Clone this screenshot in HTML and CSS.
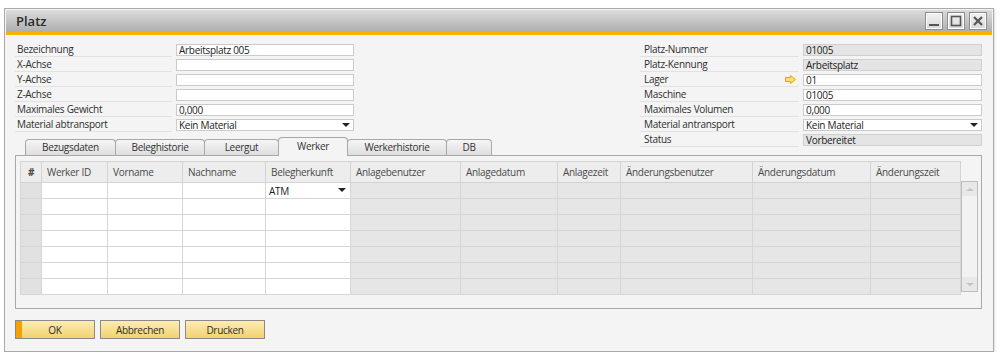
FILE: index.html
```html
<!DOCTYPE html>
<html lang="de">
<head>
    <meta charset="UTF-8">
    <meta name="viewport" content="width=device-width, initial-scale=1.0">
    <title>Platz</title>
    <link rel="stylesheet" href="styles.css">
</head>
<body>
    <div class="window">
        <div class="titlebar">
            <span class="title">Platz</span>
            <div class="winbtns">
                <span class="winbtn">
                    <svg width="12" height="12" viewBox="0 0 12 12"><rect x="1" y="9" width="10" height="2" fill="#555"/></svg>
                </span>
                <span class="winbtn">
                    <svg width="12" height="12" viewBox="0 0 12 12"><rect x="1.5" y="1.5" width="9" height="9" fill="none" stroke="#555" stroke-width="1.6"/></svg>
                </span>
                <span class="winbtn">
                    <svg width="12" height="12" viewBox="0 0 12 12"><path d="M2 2L10 10M10 2L2 10" stroke="#555" stroke-width="2.2"/></svg>
                </span>
            </div>
        </div>

        <div class="content">
            <div class="top">
                <div class="form form-left">
                    <div class="row"><span class="lbl">Bezeichnung</span><span class="fld">Arbeitsplatz 005</span></div>
                    <div class="row"><span class="lbl">X-Achse</span><span class="fld"></span></div>
                    <div class="row"><span class="lbl">Y-Achse</span><span class="fld"></span></div>
                    <div class="row"><span class="lbl">Z-Achse</span><span class="fld"></span></div>
                    <div class="row"><span class="lbl">Maximales Gewicht</span><span class="fld">0,000</span></div>
                    <div class="row"><span class="lbl">Material abtransport</span><span class="fld select">Kein Material<i class="caret"></i></span></div>
                </div>
                <div class="form form-right">
                    <div class="row"><span class="lbl">Platz-Nummer</span><span class="fld off">01005</span></div>
                    <div class="row"><span class="lbl">Platz-Kennung</span><span class="fld off">Arbeitsplatz</span></div>
                    <div class="row"><span class="lbl">Lager
                        <svg class="link" width="11" height="9" viewBox="0 0 11 9"><path d="M0.5 2.5H5.5V0.5L10.5 4.5L5.5 8.5V6.5H0.5Z" fill="#ffe066" stroke="#e3a800"/></svg>
                    </span><span class="fld">01</span></div>
                    <div class="row"><span class="lbl">Maschine</span><span class="fld">01005</span></div>
                    <div class="row"><span class="lbl">Maximales Volumen</span><span class="fld">0,000</span></div>
                    <div class="row"><span class="lbl">Material antransport</span><span class="fld select">Kein Material<i class="caret"></i></span></div>
                    <div class="row"><span class="lbl">Status</span><span class="fld off">Vorbereitet</span></div>
                </div>
            </div>

            <div class="tabs">
                <span class="tab" style="width:91px">Bezugsdaten</span>
                <span class="tab" style="width:90px">Beleghistorie</span>
                <span class="tab" style="width:75px">Leergut</span>
                <span class="tab active" style="width:70px">Werker</span>
                <span class="tab" style="width:100px">Werkerhistorie</span>
                <span class="tab" style="width:46px">DB</span>
            </div>

            <div class="panel">
                <div class="gridwrap">
                    <table class="grid">
                        <colgroup>
                            <col style="width:21px"><col style="width:66px"><col style="width:75px"><col style="width:83px">
                            <col style="width:85px"><col style="width:110px"><col style="width:97px"><col style="width:63px">
                            <col style="width:132px"><col style="width:118px"><col style="width:90px">
                        </colgroup>
                        <thead>
                            <tr>
                                <th class="num">#</th><th>Werker ID</th><th>Vorname</th><th>Nachname</th><th>Belegherkunft</th>
                                <th>Anlagebenutzer</th><th>Anlagedatum</th><th>Anlagezeit</th><th>Änderungsbenutzer</th>
                                <th>Änderungsdatum</th><th>Änderungszeit</th>
                            </tr>
                        </thead>
                        <tbody id="rows"></tbody>
                    </table>
                    <div class="scroll">
                        <span class="sbtn"><i class="up"></i></span>
                        <span class="sbtn"><i class="down"></i></span>
                    </div>
                </div>
            </div>

            <div class="buttons">
                <button class="btn ok">OK</button>
                <button class="btn">Abbrechen</button>
                <button class="btn">Drucken</button>
            </div>
        </div>
    </div>

    <script>
        var rows = document.getElementById("rows")
        for (var i = 0; i < 7; i++) {
            var tr = document.createElement('tr')
            var html = '<td class="num"></td><td></td><td></td><td></td>'
            if (i == 0) {
                html += '<td class="sel">ATM<i class="caret"></i></td>'
            } else {
                html += '<td></td>'
            }
            for (var c = 0; c < 6; c++) {
                html += '<td class="off"></td>'
            }
            tr.innerHTML = html
            rows.append(tr)
        }
    </script>
</body>
</html>
```

FILE: styles.css
```css
body{
    margin: 0;
    background: #ffffff;
    font-family: "Open Sans", "DejaVu Sans", sans-serif;
    font-size: 10px;
    letter-spacing: -0.3px;
    color: #2e2e2e;
}
.window{
    box-sizing: border-box;
    width: 990px;
    height: 344px;
    margin: 8px 0 0 4px;
    padding: 1px;
    border: 1px solid #a9a9a9;
    background: #f4f4f4;
    box-shadow: 1px 1px 2px rgba(0,0,0,0.12);
}
.titlebar{
    height: 22px;
    display: flex;
    align-items: center;
    justify-content: space-between;
    padding: 0 5px 0 10px;
    background: linear-gradient(#dcdcdc, #aeaeae);
    border-bottom: 3px solid #f5b300;
}
.title{
    font-size: 13px;
    font-weight: 600;
    letter-spacing: 0;
    color: #2b2b2b;
}
.winbtns{
    display: flex;
    gap: 4px;
}
.winbtn{
    box-sizing: border-box;
    width: 18px;
    height: 18px;
    display: flex;
    align-items: center;
    justify-content: center;
    background: linear-gradient(#f2f2f2, #d8d8d8);
    border: 1px solid #8d8d8d;
    box-shadow: inset 0 0 0 1px #ffffff;
}
.content{
    padding: 0 10px 0 9px;
}
.top{
    display: flex;
    justify-content: space-between;
    align-items: flex-start;
    padding-top: 7px;
}
.form-right{
    margin-bottom: -10px;
}
.row{
    display: flex;
    height: 15px;
    gap: 4px;
}
.lbl{
    box-sizing: border-box;
    width: 157px;
    height: 15px;
    line-height: 14px;
    padding-left: 2px;
    border-bottom: 1px solid #e2e2e2;
    display: flex;
    align-items: center;
}
.form-right .lbl{
    width: 159px;
    padding-left: 4px;
}
.link{
    margin-left: auto;
    margin-right: 3px;
}
.fld{
    box-sizing: border-box;
    position: relative;
    width: 178px;
    height: 12px;
    margin-top: 2px;
    padding-left: 2px;
    line-height: 10px;
    background: #ffffff;
    border: 1px solid #cbcbcb;
    color: #222;
}
.form-right .fld{
    width: 179px;
}
.fld.off{
    background: #e4e4e4;
    border-color: #d0d0d0;
}
.caret{
    position: absolute;
    right: 3px;
    top: 3px;
    border-left: 4px solid transparent;
    border-right: 4px solid transparent;
    border-top: 4px solid #222;
}
.tabs{
    display: flex;
    height: 18px;
    padding-left: 10px;
    position: relative;
    z-index: 1;
}
.tab{
    box-sizing: border-box;
    height: 16px;
    margin-top: 2px;
    margin-right: -1px;
    line-height: 14px;
    text-align: center;
    background: linear-gradient(#f6f6f6, #dedede);
    border: 1px solid #a8a8a8;
    border-bottom: none;
    border-radius: 4px 4px 0 0;
    color: #333;
}
.tab.active{
    height: 19px;
    margin-top: 0;
    line-height: 17px;
    background: #f4f4f4;
    position: relative;
    z-index: 1;
}
.panel{
    box-sizing: border-box;
    height: 154px;
    border: 1px solid #a9a9a9;
    padding: 5px 0 0 4px;
}
.gridwrap{
    display: flex;
    align-items: flex-start;
}
.grid{
    width: 940px;
    table-layout: fixed;
    border-collapse: collapse;
}
.grid th{
    height: 20px;
    padding: 0 0 0 5px;
    text-align: left;
    font-weight: normal;
    color: #4a4a4a;
    background: #ededed;
    border: 1px solid #d3d3d3;
    white-space: nowrap;
    overflow: hidden;
}
.grid th.num{
    padding: 0;
    text-align: center;
    font-weight: bold;
}
.grid td{
    position: relative;
    height: 15px;
    padding: 0 0 0 3px;
    background: #ffffff;
    border: 1px solid #d6d6d6;
    line-height: 14px;
    color: #222;
}
.grid td.num{
    background: #e1e1e1;
}
.grid td.off{
    background: #e6e6e6;
}
.grid td .caret{
    right: 4px;
    top: 5px;
}
.scroll{
    box-sizing: border-box;
    width: 17px;
    height: 111px;
    margin-top: 20px;
    display: flex;
    flex-direction: column;
    justify-content: space-between;
    background: #f2f2f2;
    border: 1px solid #bdbdbd;
}
.sbtn{
    height: 14px;
    display: flex;
    align-items: center;
    justify-content: center;
    background: #e8e8e8;
}
.up{
    border-left: 4px solid transparent;
    border-right: 4px solid transparent;
    border-bottom: 3px solid #c2c2c2;
}
.down{
    border-left: 4px solid transparent;
    border-right: 4px solid transparent;
    border-top: 3px solid #c2c2c2;
}
.buttons{
    display: flex;
    gap: 5px;
    margin-top: 11px;
}
.btn{
    width: 80px;
    height: 19px;
    padding: 0;
    font-family: "Open Sans", "DejaVu Sans", sans-serif;
    font-size: 10px;
    letter-spacing: -0.3px;
    color: #2e2e2e;
    background: linear-gradient(#fcecb4, #f3d270);
    border: 1px solid #8a8a8a;
    border-radius: 0;
}
.btn.ok{
    background: linear-gradient(90deg, #f2a100 0, #f2a100 6px, transparent 6px), linear-gradient(#fcecb4, #f3d270);
}
```
